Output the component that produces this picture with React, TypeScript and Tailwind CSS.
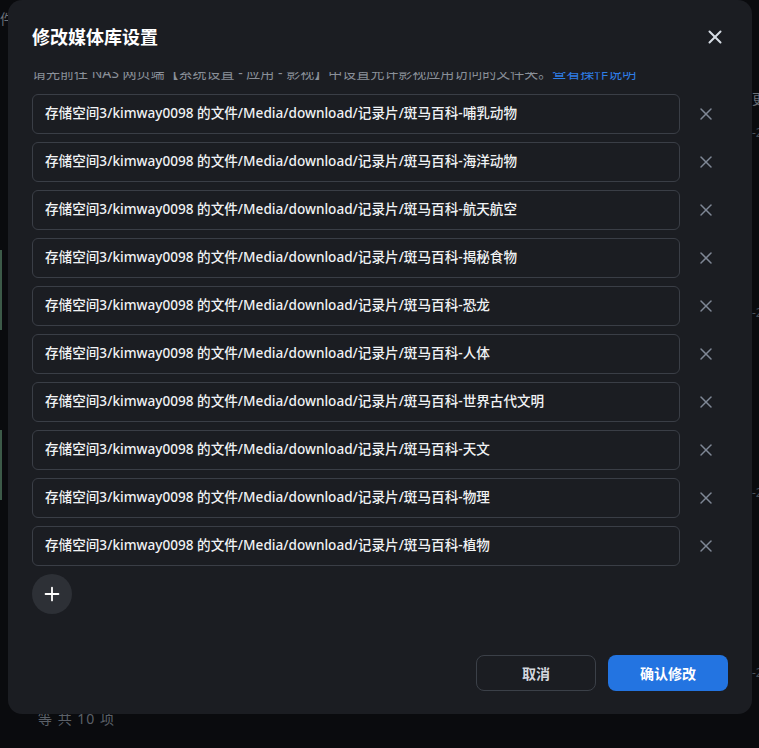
import { X, Plus } from 'lucide-react';

const folders = [
  '哺乳动物',
  '海洋动物',
  '航天航空',
  '揭秘食物',
  '恐龙',
  '人体',
  '世界古代文明',
  '天文',
  '物理',
  '植物',
];

const font = { fontFamily: '"Noto Sans", "Noto Sans CJK SC", sans-serif' };

export default function App() {
  return (
    <div className="relative w-[759px] h-[748px] overflow-hidden bg-[#0a0b0e]" style={font}>
      {/* page behind the overlay */}
      <div className="absolute left-0 top-[8px] text-[14px] text-[#6b7078]">件</div>
      <div className="absolute left-[752px] top-[88px] text-[14px] text-[#6b7078]">更</div>
      {[124, 304, 484, 664].map((t) => (
        <div key={t} className="absolute left-[752px] text-[12px] text-[#4b5058]" style={{ top: t }}>
          -2
        </div>
      ))}
      <div className="absolute left-0 top-[250px] w-[2px] h-[80px] bg-[#3c5a48]" />
      <div className="absolute left-0 top-[430px] w-[2px] h-[70px] bg-[#3c5a48]" />
      <div className="absolute left-[38px] top-[708px] text-[14px] text-[#5b6068] tracking-[1px]">等 共 10 项</div>

      {/* modal */}
      <div className="absolute left-[8px] top-0 w-[744px] h-[714px] rounded-[14px] bg-[#1b1d22] flex flex-col">
        <div className="h-[72px] shrink-0 flex items-start justify-between pl-[24px] pr-[26px] pt-[23px]">
          <h2 className="text-[18px] leading-[28px] font-bold text-white">修改媒体库设置</h2>
          <button className="mt-[3px] text-[#d6dce4]">
            <X size={22} strokeWidth={2.2} />
          </button>
        </div>

        <div className="h-[563px] overflow-hidden px-[24px]">
          <p className="-mt-[10px] text-[14px] leading-[22px] text-[#8a9099] whitespace-nowrap">
            请先前往 NAS 网页端【系统设置 - 应用 - 影视】中设置允许影视应用访问的文件夹。
            <span className="text-[#2f7ee6]">查看操作说明</span>
          </p>
          <div className="mt-[10px] flex flex-col gap-[8px]">
            {folders.map((f) => (
              <div key={f} className="flex items-center">
                <div className="w-[648px] h-[40px] rounded-[6px] border border-[#3a3e46] flex items-center pl-[12px] pb-[1px] text-[13.6px] font-medium text-[#f0f2f4] whitespace-nowrap">
                  存储空间3/kimway0098 的文件/Media/download/记录片/斑马百科-{f}
                </div>
                <button className="flex-1 flex justify-center pl-[4px] text-[#7f8795]">
                  <X size={20} strokeWidth={1.8} />
                </button>
              </div>
            ))}
            <button className="w-[40px] h-[40px] rounded-full bg-[#2d3036] flex items-center justify-center text-white">
              <Plus size={22} strokeWidth={2} />
            </button>
          </div>
        </div>

        <div className="flex justify-end gap-[12px] pt-[20px] pr-[24px]">
          <button className="w-[120px] h-[36px] rounded-[8px] border border-[#3b4048] text-[14px] font-bold text-[#d3d7dd]">
            取消
          </button>
          <button className="w-[120px] h-[36px] rounded-[8px] bg-[#2374e1] text-[14px] font-bold text-white">
            确认修改
          </button>
        </div>
      </div>
    </div>
  );
}
